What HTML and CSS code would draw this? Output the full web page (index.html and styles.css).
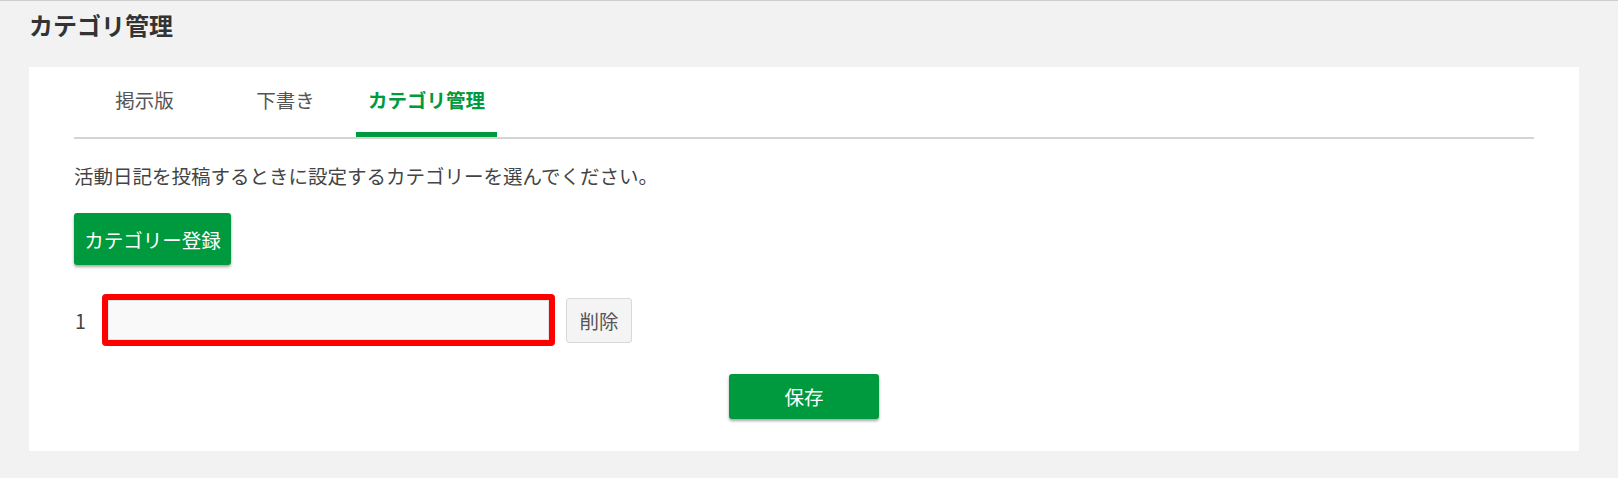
FILE: index.html
```html
<!DOCTYPE html>
<html lang="ja">
<head>
    <meta charset="UTF-8">
    <meta name="viewport" content="width=device-width, initial-scale=1.0">
    <title>カテゴリ管理</title>
    <link rel="stylesheet" href="styles.css">
</head>
<body>
    <div class="page">
        <h1>カテゴリ管理</h1>

        <div class="card">
            <ul class="tabs">
                <li class="tab">掲示版</li>
                <li class="tab">下書き</li>
                <li class="tab active">カテゴリ管理</li>
            </ul>

            <p class="description">活動日記を投稿するときに設定するカテゴリーを選んでください。</p>

            <button class="btn-green btn-add">カテゴリー登録</button>

            <div class="category-row">
                <span class="row-number">1</span>
                <input type="text" class="category-input">
                <button class="btn-delete">削除</button>
            </div>

            <div class="save-area">
                <button class="btn-green btn-save">保存</button>
            </div>
        </div>
    </div>
</body>
</html>
```

FILE: styles.css
```css
* {
    box-sizing: border-box;
    font-family: "Noto Sans CJK JP", "Noto Sans", sans-serif;
}

body {
    margin: 0;
    background-color: #f2f2f2;
    border-top: 1px solid #cfcfcf;
    color: #444;
}

.page {
    padding: 8px 39px 27px 29px;
}

h1 {
    margin: 0 0 26px;
    font-size: 24px;
    line-height: 32px;
    font-weight: 700;
    color: #333;
}

.card {
    background-color: #fff;
    padding: 0 45px 32px;
}

.tabs {
    display: flex;
    list-style: none;
    margin: 0;
    padding: 0;
    border-bottom: 2px solid #d4d4d4;
}

.tab {
    width: 141px;
    padding: 18px 0 17px;
    text-align: center;
    font-size: 19.5px;
    line-height: 30px;
    color: #555;
    border-bottom: 5px solid transparent;
}

.tab.active {
    color: #009a3e;
    font-weight: 700;
    border-bottom-color: #009a3e;
}

.description {
    margin: 22px 0 0;
    font-size: 19.5px;
    line-height: 30px;
    color: #444;
}

.btn-green {
    display: block;
    border: none;
    border-radius: 3px;
    background-color: #009a3e;
    color: #fff;
    font-size: 19.5px;
    box-shadow: 0 2px 3px rgba(0, 0, 0, 0.35);
    cursor: pointer;
}

.btn-add {
    margin-top: 22px;
    height: 52px;
    width: 157px;
    padding: 0;
}

.category-row {
    display: flex;
    align-items: center;
    margin-top: 29px;
}

.row-number {
    width: 28px;
    padding-left: 1px;
    font-size: 19.5px;
    color: #444;
}

.category-input {
    width: 453px;
    height: 52px;
    border: 6px solid #ff0000;
    border-radius: 4px;
    background-color: #f9f9f9;
    box-shadow: inset 0 0 0 1px #e2e2e2;
    font-size: 18px;
    outline: none;
}

.btn-delete {
    margin-left: 11px;
    width: 66px;
    height: 45px;
    border: 1px solid #d9d9d9;
    border-radius: 3px;
    background-color: #f4f4f4;
    color: #555;
    font-size: 19.5px;
    cursor: pointer;
}

.save-area {
    display: flex;
    justify-content: center;
    margin-top: 28px;
}

.btn-save {
    width: 150px;
    height: 45px;
}
```
